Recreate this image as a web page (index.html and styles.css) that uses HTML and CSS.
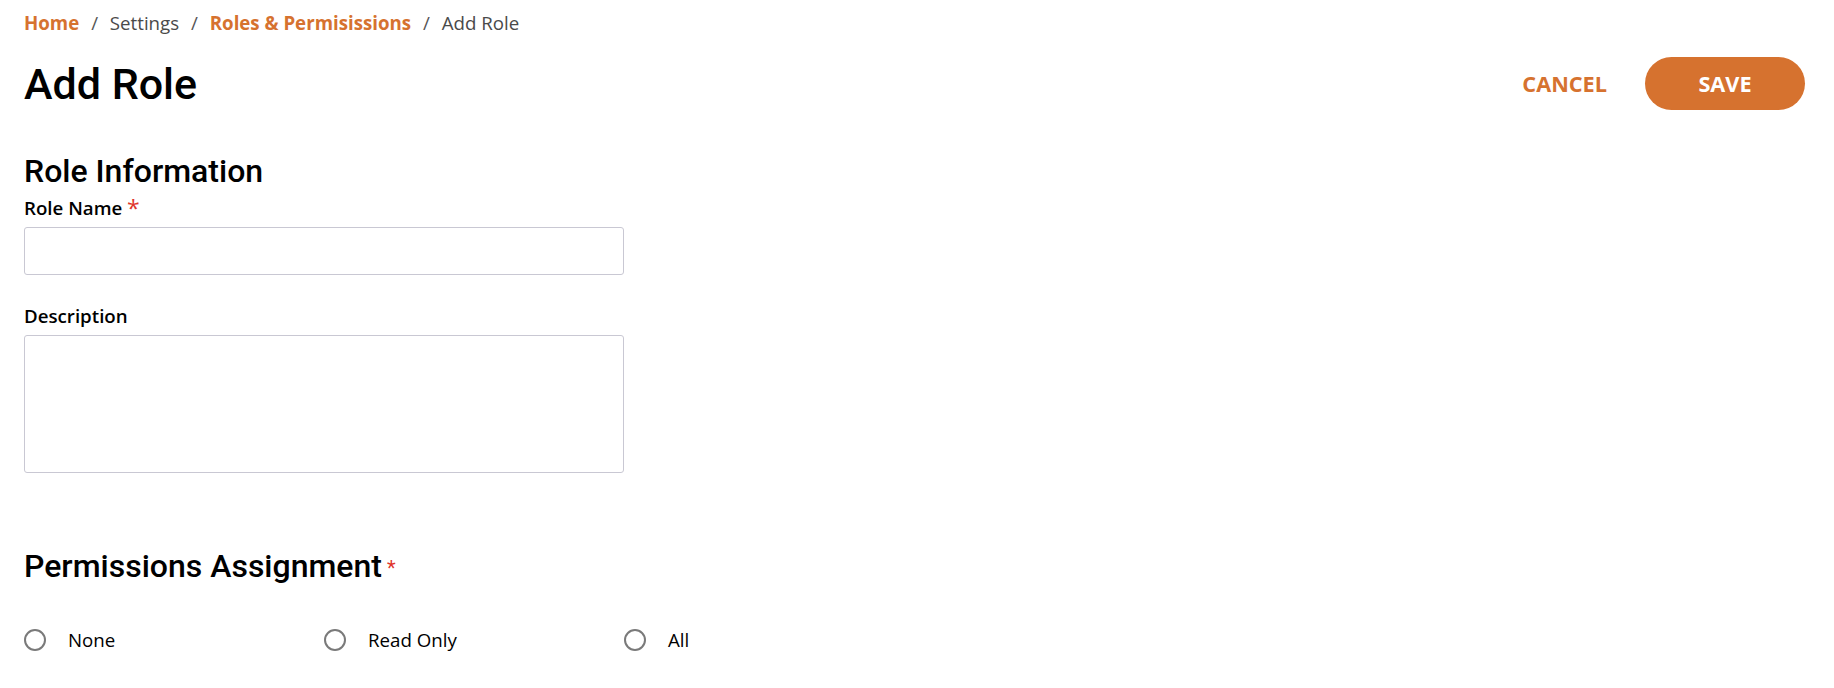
FILE: index.html
```html
<!DOCTYPE html>
<html lang="en">
<head>
    <meta charset="UTF-8">
    <meta name="viewport" content="width=device-width, initial-scale=1.0">
    <link rel="stylesheet" href="styles.css">
</head>
<body>
    <div class="page">
        <nav class="breadcrumb">
            <a href="#" class="crumb-link">Home</a>
            <span class="sep">/</span>
            <span class="crumb">Settings</span>
            <span class="sep">/</span>
            <a href="#" class="crumb-link">Roles &amp; Permisissions</a>
            <span class="sep">/</span>
            <span class="crumb">Add Role</span>
        </nav>

        <div class="page-header">
            <h1 class="page-title">Add Role</h1>
            <div class="actions">
                <button class="btn-cancel">CANCEL</button>
                <button class="btn-save">SAVE</button>
            </div>
        </div>

        <h2 class="section-title">Role Information</h2>
        <label class="field-label" for="role-name">Role Name <span class="req">*</span></label>
        <input type="text" id="role-name" class="field-input">

        <label class="field-label desc-label" for="description">Description</label>
        <textarea id="description" class="field-textarea"></textarea>

        <h2 class="section-title perm-title">Permissions Assignment<span class="req small">*</span></h2>

        <div class="radio-row">
            <label class="radio-item"><input type="radio" name="perm"><span class="radio-dot"></span>None</label>
            <label class="radio-item"><input type="radio" name="perm"><span class="radio-dot"></span>Read Only</label>
            <label class="radio-item"><input type="radio" name="perm"><span class="radio-dot"></span>All</label>
        </div>
    </div>
</body>
</html>
```

FILE: styles.css
```css
body {
    margin: 0;
    background: #ffffff;
    color: #000000;
    font-family: "Open Sans", "Noto Sans", sans-serif;
}
.page {
    padding: 11px 29px 0 24px;
}

/* breadcrumb */
.breadcrumb {
    font-size: 18.7px;
    line-height: 24px;
    color: #4a4a4a;
}
.crumb-link {
    color: #d6722f;
    font-weight: 700;
    text-decoration: none;
}
.sep {
    margin: 0 7px;
    color: #555555;
}

/* header */
.page-header {
    display: flex;
    align-items: center;
    justify-content: space-between;
    margin-top: 22px;
    height: 53px;
}
.page-title {
    margin: 0;
    font-family: Roboto, sans-serif;
    font-weight: 500;
    font-size: 43px;
    line-height: 50px;
}
.actions {
    display: flex;
    align-items: center;
}
.btn-cancel {
    background: none;
    border: none;
    color: #d6722f;
    font-family: "Open Sans", sans-serif;
    font-weight: 700;
    font-size: 21.7px;
    padding: 0;
    margin-right: 38px;
}
.btn-save {
    width: 160px;
    height: 53px;
    border: none;
    border-radius: 27px;
    background: #d6722f;
    color: #ffffff;
    font-family: "Open Sans", sans-serif;
    font-weight: 700;
    font-size: 21.7px;
}

/* form */
.section-title {
    margin: 0;
    font-family: Roboto, sans-serif;
    font-weight: 500;
    font-size: 32px;
    line-height: 38px;
    margin-top: 42px;
}
.field-label {
    display: block;
    font-size: 18.7px;
    line-height: 24px;
    font-weight: 600;
    margin-top: 6px;
}
.req {
    color: #e0352b;
    font-weight: 400;
    font-size: 23px;
    line-height: 0;
    vertical-align: -2px;
}
.req.small {
    font-size: 20px;
    margin-left: 5px;
    vertical-align: 2px;
}
.field-input {
    display: block;
    box-sizing: border-box;
    width: 600px;
    height: 48px;
    margin-top: 7px;
    border: 1px solid #c9c8d3;
    border-radius: 3px;
}
.desc-label {
    margin-top: 29px;
}
.field-textarea {
    display: block;
    box-sizing: border-box;
    width: 600px;
    height: 138px;
    margin-top: 7px;
    border: 1px solid #c9c8d3;
    border-radius: 3px;
    resize: none;
}
.perm-title {
    margin-top: 74px;
}

/* radios */
.radio-row {
    display: flex;
    margin-top: 43px;
}
.radio-item {
    display: flex;
    align-items: center;
    width: 300px;
    font-size: 18.7px;
    line-height: 24px;
}
.radio-item input {
    display: none;
}
.radio-dot {
    box-sizing: border-box;
    width: 22px;
    height: 22px;
    border: 2px solid #7a7a7a;
    border-radius: 50%;
    margin-right: 22px;
}
```
